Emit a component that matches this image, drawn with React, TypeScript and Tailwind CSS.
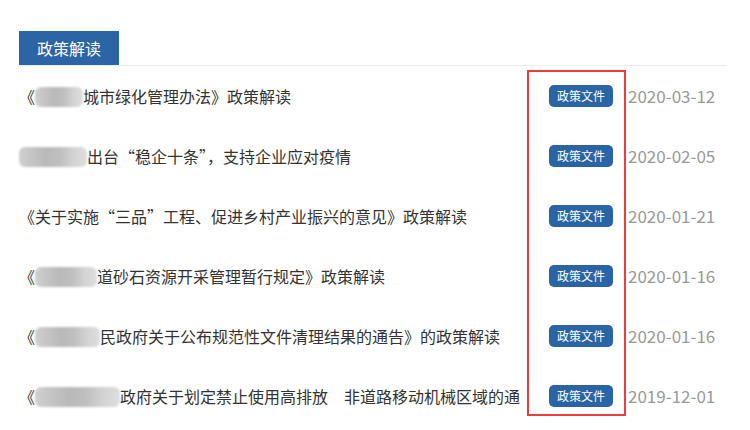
import React from "react";

type Row = { pre?: string; blur?: number; text: string; date: string };

const rows: Row[] = [
  { pre: "《", blur: 48, text: "城市绿化管理办法》政策解读", date: "2020-03-12" },
  { blur: 68, text: "出台“稳企十条”，支持企业应对疫情", date: "2020-02-05" },
  { pre: "《", text: "关于实施“三品”工程、促进乡村产业振兴的意见》政策解读", date: "2020-01-21" },
  { pre: "《", blur: 62, text: "道砂石资源开采管理暂行规定》政策解读", date: "2020-01-16" },
  { pre: "《", blur: 65, text: "民政府关于公布规范性文件清理结果的通告》的政策解读", date: "2020-01-16" },
  { pre: "《", blur: 85, text: "政府关于划定禁止使用高排放　非道路移动机械区域的通", date: "2019-12-01" },
];

function Blur({ w }: { w: number }) {
  return (
    <span
      className="inline-block h-[20px] align-[-4px] rounded-[6px] blur-[1px]"
      style={{
        width: w,
        background:
          "linear-gradient(90deg,#cfcfcf 0%,#c4c4c4 20%,#b9b9b9 40%,#bfbfbf 60%,#d3d3d3 80%,#dedede 100%)",
      }}
    />
  );
}

export default function App() {
  return (
    <div className="relative w-[750px] h-[430px] bg-white overflow-hidden font-['Noto_Sans_CJK_SC','Microsoft_YaHei',sans-serif]">
      <div className="pt-[31px] pl-[19px] w-[727px]">
        <div className="border-b border-[#ebebeb] flex">
          <div className="w-[100px] h-[34px] bg-[#2c65a5] text-white text-[16px] leading-[34px] pl-[18px]">
            政策解读
          </div>
        </div>
        <div className="flex flex-col">
          {rows.map((r, i) => (
            <div key={i} className="h-[60px] flex items-center">
              <div className="w-[497px] shrink-0 whitespace-nowrap text-[16px] text-[#333] leading-[20px]">
                {r.pre}
                {r.blur ? <Blur w={r.blur} /> : null}
                {r.text}
              </div>
              <div className="ml-[33px] w-[64px] h-[22px] rounded-[5px] bg-[#2a64a4] text-white text-[12px] leading-[22px] text-center shrink-0">
                政策文件
              </div>
              <div className="ml-[15px] text-[17px] text-[#999] whitespace-nowrap">{r.date}</div>
            </div>
          ))}
        </div>
      </div>
      <div className="absolute left-[527px] top-[70px] w-[99px] h-[346px] border-2 border-[#f23a3a] pointer-events-none" />
    </div>
  );
}
